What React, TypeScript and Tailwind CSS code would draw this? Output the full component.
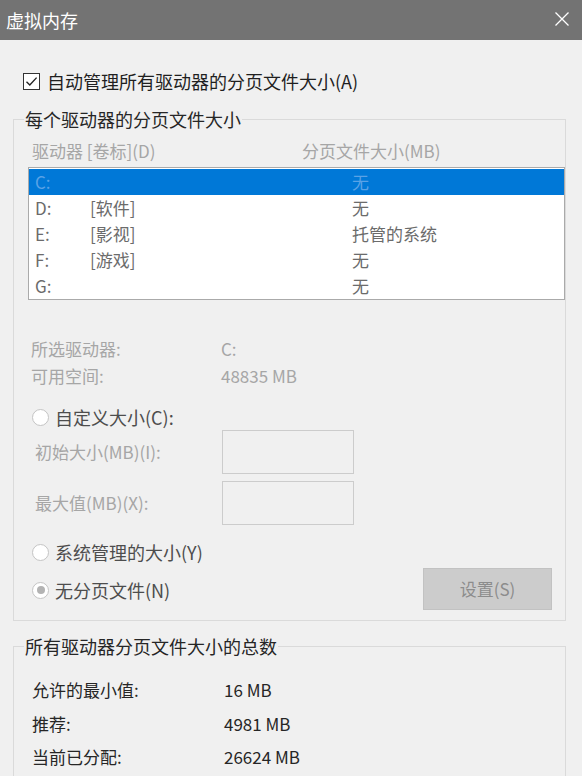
import type { ReactNode } from 'react'

const FONT = '"Noto Sans CJK SC", "Noto Sans", "Liberation Sans", sans-serif'

const DRIVES = [
  { letter: 'C:', label: '', size: '无', selected: true },
  { letter: 'D:', label: '[软件]', size: '无' },
  { letter: 'E:', label: '[影视]', size: '托管的系统' },
  { letter: 'F:', label: '[游戏]', size: '无' },
  { letter: 'G:', label: '', size: '无' },
]

const TOTALS = [
  { label: '允许的最小值:', value: '16 MB' },
  { label: '推荐:', value: '4981 MB' },
  { label: '当前已分配:', value: '26624 MB' },
]

function Radio({ checked, children }: { checked?: boolean; children: ReactNode }) {
  return (
    <div className="flex h-[26px] items-center">
      <span className="ml-[18px] flex h-[17px] w-[17px] items-center justify-center rounded-full border border-[#c4c4c4] bg-white">
        {checked && <span className="h-[8px] w-[8px] rounded-full bg-[#b3b3b3]" />}
      </span>
      <span className="ml-[6px] text-[18px] leading-[26px] text-[#4d4d4d]">{children}</span>
    </div>
  )
}

function SizeField({ label }: { label: string }) {
  return (
    <div className="flex items-center">
      <span className="w-[208px] pl-[21px] text-[17px] leading-[26px] text-[#a6a6a6]">
        {label}
      </span>
      <div className="h-[44px] w-[132px] border border-[#cccccc] bg-[#f0f0f0]" />
    </div>
  )
}

export default function App() {
  return (
    <div
      className="h-[776px] w-[582px] overflow-hidden bg-[#f0f0f0]"
      style={{ fontFamily: FONT }}
    >
      {/* title bar */}
      <div className="flex h-[40px] items-center justify-between bg-[#737373] pl-[6px] pr-[12px]">
        <span className="text-[18px] leading-[24px] text-white">虚拟内存</span>
        <svg width="16" height="16" viewBox="0 0 16 16" className="mb-[2px]">
          <path d="M1.5 1.5 L14.5 14.5 M14.5 1.5 L1.5 14.5" stroke="#ffffff" strokeWidth="1.3" />
        </svg>
      </div>

      {/* auto manage */}
      <div className="mt-[32px] flex h-[18px] items-center pl-[23px]">
        <span className="flex h-[17px] w-[17px] items-center justify-center border border-[#333333] bg-white">
          <svg width="15" height="15" viewBox="0 0 15 15">
            <path d="M2.5 7.8 L5.8 11 L12.6 3.6" fill="none" stroke="#222222" strokeWidth="1.4" />
          </svg>
        </span>
        <span className="ml-[7px] text-[18px] leading-[26px] text-[#1f1f1f]">
          自动管理所有驱动器的分页文件大小(A)
        </span>
      </div>

      {/* per drive */}
      <fieldset className="mt-[17px] ml-[13px] w-[553px] border border-[#dadada] pb-[10px]">
        <legend className="ml-[10px] px-[1px] text-[18px] leading-[24px] text-[#262626]">
          每个驱动器的分页文件大小
        </legend>

        <div className="mt-[8px] flex text-[17px] leading-[24px] text-[#a6a6a6]">
          <span className="w-[288px] pl-[18px]">驱动器 [卷标](D)</span>
          <span>分页文件大小(MB)</span>
        </div>

        <div className="mt-[4px] ml-[14px] border border-[#aaaaaa] bg-white pt-[1px]">
          {DRIVES.map((drive) => (
            <div
              key={drive.letter}
              className={
                drive.selected
                  ? 'flex h-[26px] items-center bg-[#0078d7] text-[17px] text-[#5aa2e6]'
                  : 'flex h-[26px] items-center text-[17px] text-[#6b6b6b]'
              }
            >
              <span className="w-[61px] pl-[6px]">{drive.letter}</span>
              <span className="w-[262px]">{drive.label}</span>
              <span>{drive.size}</span>
            </div>
          ))}
        </div>

        <div className="mt-[35px] grid grid-cols-[207px_1fr] text-[17px] leading-[27px] text-[#a6a6a6]">
          <span className="pl-[17px]">所选驱动器:</span>
          <span>C:</span>
          <span className="pl-[17px]">可用空间:</span>
          <span>48835 MB</span>
        </div>

        <div className="mt-[15px]">
          <Radio>自定义大小(C):</Radio>
        </div>
        <div className="flex flex-col gap-[7px]">
          <SizeField label="初始大小(MB)(I):" />
          <SizeField label="最大值(MB)(X):" />
        </div>
        <div className="mt-[14px]">
          <Radio>系统管理的大小(Y)</Radio>
        </div>
        <div className="mt-[3px] flex items-end justify-between pr-[13px]">
          <div className="mb-[7px]">
            <Radio checked>无分页文件(N)</Radio>
          </div>
          <div className="flex h-[42px] w-[129px] items-center justify-center border border-[#c2c2c2] bg-[#cccccc] text-[17px] text-[#8c8c8c]">
            设置(S)
          </div>
        </div>
      </fieldset>

      {/* totals */}
      <fieldset className="mt-[13px] ml-[13px] w-[553px] border border-[#dadada] pb-[40px]">
        <legend className="ml-[10px] px-[1px] text-[18px] leading-[24px] text-[#262626]">
          所有驱动器分页文件大小的总数
        </legend>
        <div className="mt-[15px] grid grid-cols-[210px_1fr] text-[17px] leading-[33.5px] text-[#262626]">
          {TOTALS.map((row) => (
            <div key={row.label} className="contents">
              <span className="pl-[18px]">{row.label}</span>
              <span>{row.value}</span>
            </div>
          ))}
        </div>
      </fieldset>
    </div>
  )
}
